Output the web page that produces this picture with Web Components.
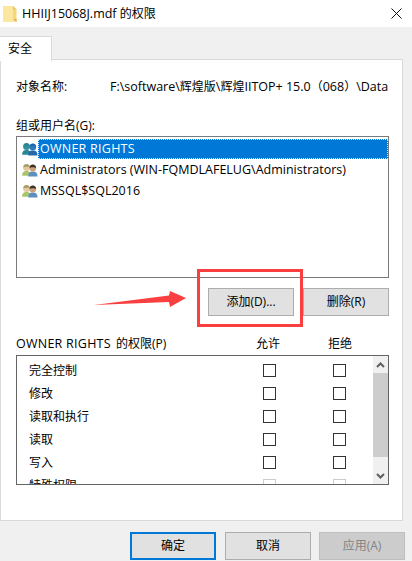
<!DOCTYPE html>
<html lang="zh">
<head>
<meta charset="utf-8">
<title>权限</title>
<style>
html, body { margin: 0; padding: 0; background: #f0f0f0; }
body { width: 412px; height: 561px; overflow: hidden; font: 12px/16px "Open Sans", "Noto Sans CJK SC", sans-serif; color: #000; }
</style>
</head>
<body>
<perm-dialog></perm-dialog>

<script>
const FONT = `"Open Sans", "Noto Sans CJK SC", sans-serif`

class winButton extends HTMLElement {
  constructor() {
    super()
    this.attachShadow({ mode: "open" })
  }
  connectedCallback() {
    this.shadowRoot.innerHTML = `
<style>
:host { display: flex; width: 86px; height: 28px; box-sizing: border-box; align-items: center; justify-content: center;
  background: #e1e1e1; border: 1px solid #adadad; font: 12px/16px ${FONT}; color: #000; }
:host([primary]) { border: 2px solid #0078d7; }
:host([disabled]) { background: #cccccc; border-color: #bfbfbf; color: #838383; }
</style><slot></slot>`
  }
}
customElements.define("win-button", winButton)

class userIcon extends HTMLElement {
  constructor() {
    super()
    this.attachShadow({ mode: "open" })
  }
  connectedCallback() {
    // selected row uses the teal + blue pair, the others a green + dark-haired pair
    const group = this.hasAttribute("group")
    const back = group ? "#2a8594" : "#a9c46c"
    const backHead = group ? "#2f8f9d" : "#e3c9a0"
    const front = group ? "#2468ab" : "#5f8fbf"
    const frontHead = group ? "#2f7abd" : "#c9a27c"
    const hair = group ? "#2468ab" : "#3d3229"
    const backHair = group ? "#2a8594" : "#a89a66"
    this.shadowRoot.innerHTML = `
<style>:host { display: block; width: 16px; height: 14px; flex: none; } svg { display: block; }</style>
<svg width="16" height="14" viewBox="0 0 18 16">
  <path d="M0 14.5 C0 10.5 2 9 5 9 C8 9 10 10.5 10 14.5 Z" fill="${back}"/>
  <circle cx="5" cy="5.4" r="3.8" fill="${backHead}"/>
  <path d="M1.4 5 C1.4 2.4 3 1.2 5 1.2 C7 1.2 8.6 2.4 8.6 4.4 C6.6 4.4 4 4.2 1.4 5 Z" fill="${backHair}"/>
  <path d="M7 15.5 C7 11 9 9.6 12.2 9.6 C15.4 9.6 17.6 11 17.6 15.5 Z" fill="${front}"/>
  <circle cx="12.2" cy="5.8" r="3.9" fill="${frontHead}"/>
  <path d="M8.4 5.6 C8.4 3 10.2 1.6 12.2 1.6 C14.2 1.6 16 3 16 5.6 C14.6 4.6 10 4.4 8.4 5.6 Z" fill="${hair}"/>
</svg>`
  }
}
customElements.define("user-icon", userIcon)

class userRow extends HTMLElement {
  constructor() {
    super()
    this.attachShadow({ mode: "open" })
  }
  connectedCallback() {
    const sel = this.hasAttribute("selected")
    this.shadowRoot.innerHTML = `
<style>
:host { display: flex; height: 21px; align-items: center; padding-left: 5px; font-size: 12.5px; }
.name { flex: 1; height: 20px; line-height: 20px; padding-left: 2px; white-space: nowrap; box-sizing: border-box; }
:host([selected]) .name { background: #0078d7; color: #fff; outline: 1px dotted #cfe6fa; outline-offset: -1px; letter-spacing: .25px; }
</style>
<user-icon ${sel ? "group" : ""}></user-icon>
<div class="name"><slot></slot></div>`
  }
}
customElements.define("user-row", userRow)

class permRow extends HTMLElement {
  constructor() {
    super()
    this.attachShadow({ mode: "open" })
  }
  connectedCallback() {
    this.shadowRoot.innerHTML = `
<style>
:host { display: grid; grid-template-columns: 234px 13px 57px 13px; height: 23px; align-items: center; padding-left: 12px; flex: none; }
.box { width: 13px; height: 13px; box-sizing: border-box; border: 1px solid #333; background: #fff; }
.c2 { grid-column: 4; }
:host([disabled]) .box { border-color: #cccccc; }
</style>
<div><slot></slot></div><div class="box"></div><div class="box c2"></div>`
  }
}
customElements.define("perm-row", permRow)

class scrollBar extends HTMLElement {
  constructor() {
    super()
    this.attachShadow({ mode: "open" })
  }
  connectedCallback() {
    this.shadowRoot.innerHTML = `
<style>
:host { display: flex; flex-direction: column; width: 15px; flex: none; background: #f0f0f0; }
.btn { height: 17px; display: flex; align-items: center; justify-content: center; flex: none; }
.thumb { height: 84px; background: #cdcdcd; flex: none; }
.fill { flex: 1; }
svg { display: block; }
</style>
<div class="btn"><svg width="9" height="6" viewBox="0 0 9 6"><path d="M1 5 L4.5 1.5 L8 5" fill="none" stroke="#606060" stroke-width="2"/></svg></div>
<div class="thumb"></div>
<div class="fill"></div>
<div class="btn"><svg width="9" height="6" viewBox="0 0 9 6"><path d="M1 1 L4.5 4.5 L8 1" fill="none" stroke="#606060" stroke-width="2"/></svg></div>`
  }
}
customElements.define("scroll-bar", scrollBar)

class permDialog extends HTMLElement {
  constructor() {
    super()
    this.attachShadow({ mode: "open" })
  }
  connectedCallback() {
    this.shadowRoot.innerHTML = `
<style>
:host { display: block; position: relative; width: 412px; height: 561px; overflow: hidden; background: #f0f0f0; font: 12px/16px ${FONT}; color: #000; }
.l { font-size: 12.5px; }
.w { letter-spacing: .25px; margin-right: 2px; }
.title { height: 27px; background: #fff; display: flex; align-items: center; padding-left: 3px; }
.title .txt { margin-left: 5px; flex: 1; white-space: nowrap; }
.title .close { margin-right: 10px; display: block; }
.tabs { height: 33px; box-sizing: border-box; padding-top: 9px; display: flex; position: relative; z-index: 1; }
.tab { width: 52px; height: 25px; box-sizing: border-box; background: #fff; border: 1px solid #d9d9d9; border-left: 0; border-bottom: 0; padding: 4px 0 0 8px; }
.panel { width: 403px; height: 462px; box-sizing: border-box; background: #fff; border: 1px solid #d9d9d9; padding: 19px 13px 0 15px; margin-top: -1px; }
.obj { display: flex; height: 16px; white-space: nowrap; }
.obj .label { width: 94px; flex: none; }
.label2 { margin-top: 23px; height: 16px; }
.users { margin-top: 2px; width: 373px; height: 142px; box-sizing: border-box; border: 1px solid #7a7a7a; background: #fff; padding-top: 1px; }
.actions { display: flex; justify-content: flex-end; gap: 9px; margin-top: 10px; width: 373px; }
.permhead { display: grid; grid-template-columns: 240px 24px 48px 24px; margin-top: 20px; height: 16px; white-space: nowrap; }
.perms { margin-top: 3px; width: 373px; height: 130px; box-sizing: border-box; border: 1px solid #646464; display: flex; background: #fff; }
.plist { flex: 1; overflow: hidden; display: flex; flex-direction: column; padding-top: 3px; }
.footer { display: flex; justify-content: flex-end; gap: 9px; padding: 11px 7px 0 0; }
.footer win-button:last-child { margin-left: -1px; }
.mark { position: absolute; left: 197px; top: 269px; width: 106px; height: 58px; box-sizing: border-box; border: 3px solid #f93f3f; }
.arrow { position: absolute; left: 92px; top: 288px; display: block; }
</style>
<div class="title">
  <svg width="14" height="18" viewBox="0 0 14 18"><path d="M0 1 H10 L13.5 4.5 V17 H0 Z" fill="#f6d977"/><path d="M0 1 H10 V13 L13.5 17 H0 Z" fill="#fbe79f"/><path d="M10 1 L13.5 4.5 H10 Z" fill="#e8c45a"/><path d="M10 14 H13.5 V17 Z" fill="#d9b04a"/></svg>
  <div class="txt"><span class="l">HHIIJ15068J.mdf</span> 的权限</div>
  <svg class="close" width="11" height="11" viewBox="0 0 11 11"><path d="M.5 .5 L10.5 10.5 M10.5 .5 L.5 10.5" stroke="#111" stroke-width="1"/></svg>
</div>
<div class="tabs"><div class="tab">安全</div></div>
<div class="panel">
  <div class="obj"><div class="label">对象名称:</div><div><span class="l">F:\\software\\</span>辉煌版<span class="l">\\</span>辉煌<span class="l">IITOP+ 15.0</span>（<span class="l">068</span>）<span class="l">\\Data</span></div></div>
  <div class="label2">组或用户名(G):</div>
  <div class="users">
    <user-row selected>OWNER RIGHTS</user-row>
    <user-row>Administrators (WIN-FQMDLAFELUG\\Administrators)</user-row>
    <user-row>MSSQL$SQL2016</user-row>
  </div>
  <div class="actions"><win-button>添加(D)...</win-button><win-button>删除(R)</win-button></div>
  <div class="permhead"><div><span class="l w">OWNER RIGHTS</span> 的权限(P)</div><div>允许</div><div></div><div>拒绝</div></div>
  <div class="perms">
    <div class="plist">
      <perm-row>完全控制</perm-row>
      <perm-row>修改</perm-row>
      <perm-row>读取和执行</perm-row>
      <perm-row>读取</perm-row>
      <perm-row>写入</perm-row>
      <perm-row disabled>特殊权限</perm-row>
    </div>
    <scroll-bar></scroll-bar>
  </div>
</div>
<div class="footer">
  <win-button primary>确定</win-button><win-button>取消</win-button><win-button disabled>应用(A)</win-button>
</div>
<div class="mark"></div>
<svg class="arrow" width="96" height="20" viewBox="0 0 96 20"><path d="M2 17 L77 7.5 L78 3 L94 10 L78 19 L77 14 Z" fill="#f93f3f"/></svg>`
  }
}
customElements.define("perm-dialog", permDialog)
</script>
</body>
</html>
